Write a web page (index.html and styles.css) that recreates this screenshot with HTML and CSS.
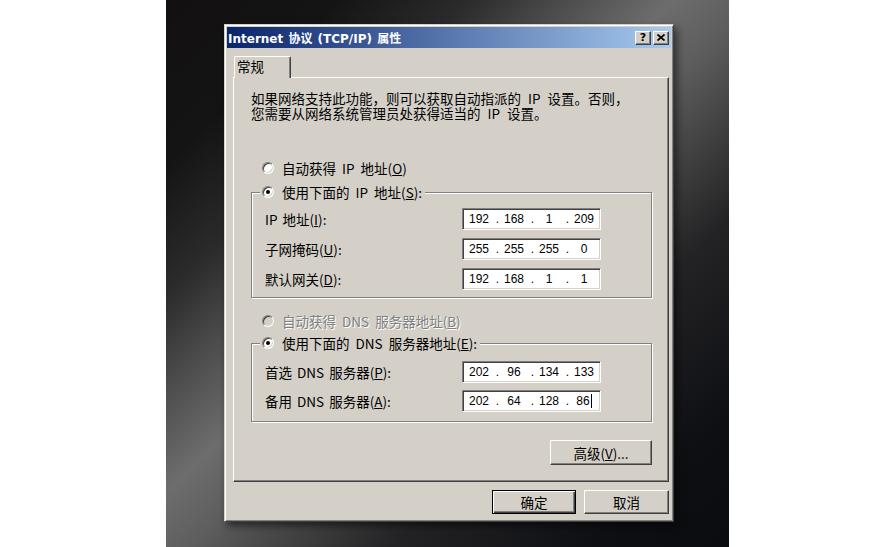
FILE: index.html
```html
<!DOCTYPE html>
<html lang="zh-CN">
<head>
<meta charset="utf-8">
<title>Internet 协议 (TCP/IP) 属性</title>
<link rel="stylesheet" href="styles.css">
</head>
<body>
<div class="stage">
  <div class="dialog">
    <div class="titlebar">
      <span class="title">Internet 协议 (TCP/IP) 属性</span>
      <div class="tbtns">
        <span class="tbtn">?</span>
        <span class="tbtn"><svg width="8" height="7" viewBox="0 0 8 7"><path d="M0.5 0.5 L7.5 6.5 M7.5 0.5 L0.5 6.5" stroke="#000" stroke-width="1.7" fill="none"/></svg></span>
      </div>
    </div>
    <div class="tabs"><div class="tab">常规</div></div>
    <div class="panel">
      <div class="intro">
        <div class="line">如果网络支持此功能，则可以获取自动指派的 IP 设置。否则，</div>
        <div class="line">您需要从网络系统管理员处获得适当的 IP 设置。</div>
      </div>

      <div class="radio r1"><span class="rb"></span><span>自动获得 IP 地址(<u>O</u>)</span></div>

      <fieldset class="group g1">
        <legend class="radio"><span class="rb on"></span><span>使用下面的 IP 地址(<u>S</u>):</span></legend>
        <div class="rows">
          <span class="lbl">IP 地址(<u>I</u>):</span>
          <div class="ip"><span class="oct">192</span><span class="dot">.</span><span class="oct">168</span><span class="dot">.</span><span class="oct">1</span><span class="dot">.</span><span class="oct">209</span></div>
          <span class="lbl">子网掩码(<u>U</u>):</span>
          <div class="ip"><span class="oct">255</span><span class="dot">.</span><span class="oct">255</span><span class="dot">.</span><span class="oct">255</span><span class="dot">.</span><span class="oct">0</span></div>
          <span class="lbl">默认网关(<u>D</u>):</span>
          <div class="ip"><span class="oct">192</span><span class="dot">.</span><span class="oct">168</span><span class="dot">.</span><span class="oct">1</span><span class="dot">.</span><span class="oct">1</span></div>
        </div>
      </fieldset>

      <div class="radio r3 dis"><span class="rb"></span><span>自动获得 DNS 服务器地址(<u>B</u>)</span></div>

      <fieldset class="group g2">
        <legend class="radio"><span class="rb on"></span><span>使用下面的 DNS 服务器地址(<u>E</u>):</span></legend>
        <div class="rows">
          <span class="lbl">首选 DNS 服务器(<u>P</u>):</span>
          <div class="ip"><span class="oct">202</span><span class="dot">.</span><span class="oct">96</span><span class="dot">.</span><span class="oct">134</span><span class="dot">.</span><span class="oct">133</span></div>
          <span class="lbl">备用 DNS 服务器(<u>A</u>):</span>
          <div class="ip"><span class="oct">202</span><span class="dot">.</span><span class="oct">64</span><span class="dot">.</span><span class="oct">128</span><span class="dot">.</span><span class="oct">86<span class="caret"></span></span></div>
        </div>
      </fieldset>

      <div class="btn advanced">高级(<u>V</u>)...</div>
    </div>
    <div class="footer">
      <div class="btn ok">确定</div>
      <div class="btn cancel">取消</div>
    </div>
  </div>
</div>
</body>
</html>
```
FILE: styles.css
```css
* { box-sizing: border-box; }
html, body { margin: 0; background: #fff; }
body {
  font-family: "Noto Sans CJK SC", "Liberation Sans", sans-serif;
  font-size: 13.5px;
  color: #000;
}
.stage {
  width: 563px;
  height: 547px;
  margin-left: 166px;
  padding: 24px 0 0 58px;
  background: linear-gradient(to bottom right, #121010 0%, #151414 15%, #2c2b2b 27%, #4a4a4a 35%, #6d6d6d 45%, #5e5e5e 52%, #4a4a4a 58%, #232325 70%, #0e0f13 88%, #0b0c10 100%);
}
.dialog {
  width: 450px;
  height: 498px;
  background: #d4d0c8;
  border: 1px solid;
  border-color: #d4d0c8 #404040 #404040 #d4d0c8;
  box-shadow: inset 1px 1px 0 #fff, inset -1px -1px 0 #808080, 3px 4px 8px rgba(0,0,0,.55);
  padding: 2px;
  display: flex;
  flex-direction: column;
}
.titlebar {
  height: 21px;
  flex: none;
  background: linear-gradient(to right, #0a246a, #a6caf0);
  display: flex;
  align-items: center;
  justify-content: space-between;
  padding: 0 2px 0 1px;
}
.title {
  color: #fff;
  font: bold 12px "DejaVu Sans", "Noto Sans CJK SC", sans-serif;
  white-space: nowrap;
  word-spacing: 1px;
}
.tbtns { display: flex; gap: 2px; }
.tbtn {
  width: 16px;
  height: 14px;
  background: #d4d0c8;
  border: 1px solid;
  border-color: #fff #404040 #404040 #fff;
  box-shadow: inset -1px -1px 0 #808080;
  display: flex;
  align-items: center;
  justify-content: center;
  font: bold 11px "DejaVu Sans", sans-serif;
  color: #000;
  line-height: 1;
}
.tabs {
  flex: none;
  margin-top: 8px;
  height: 21px;
  padding-left: 7px;
  display: flex;
}
.tab {
  position: relative;
  z-index: 1;
  width: 57px;
  height: 22px;
  background: #d4d0c8;
  border: 1px solid;
  border-color: #fff #404040 transparent #fff;
  border-bottom: 0;
  border-radius: 2px 2px 0 0;
  box-shadow: inset -1px 0 0 #808080;
  padding: 0 0 0 2px;
  line-height: 18px;
}
.panel {
  flex: none;
  height: 405px;
  margin: 0 2px 0 6px;
  border: 1px solid;
  border-color: #fff #404040 #404040 #fff;
  box-shadow: inset -1px -1px 0 #808080;
  padding: 13px 16px 0 17px;
  display: flex;
  flex-direction: column;
}
.intro { white-space: nowrap; word-spacing: 4px; }
.intro .line { height: 15px; line-height: 15px; }
.radio {
  display: flex;
  align-items: center;
  gap: 8px;
  height: 16px;
  line-height: 16px;
  white-space: nowrap;
  word-spacing: 3px;
}
.r1 { margin: 39px 0 0 11px; }
.r3 { margin: 15px 0 0 11px; }
.rb {
  flex: none;
  position: relative;
  width: 12px;
  height: 12px;
  border-radius: 50%;
  background: #fff;
  border: 1px solid;
  border-color: #808080 #fff #fff #808080;
  box-shadow: inset 1px 1px 0 #404040, inset -1px -1px 0 #d4d0c8;
}
.rb.on::after {
  content: "";
  position: absolute;
  left: 3px;
  top: 3px;
  width: 4px;
  height: 4px;
  border-radius: 50%;
  background: #000;
}
.dis { color: #808080; text-shadow: 1px 1px 0 #fff; }
.dis .rb { background: #d4d0c8; }
.group {
  margin: 8px 0 0;
  padding: 8px 0 7px 8px;
  border: 1px solid #808080;
  box-shadow: inset 1px 1px 0 #fff, 1px 1px 0 #fff;
  min-width: 0;
}
.g2 { margin-top: 6px; padding-top: 10px; padding-bottom: 9px; }
.group legend {
  padding: 0 3px 0 2px;
  margin: 0;
  background: #d4d0c8;
}
.rows {
  display: grid;
  grid-template-columns: 197px 139px;
  row-gap: 8px;
  align-items: center;
  margin-left: 5px;
}
.g2 .rows { row-gap: 7px; }
.lbl { white-space: nowrap; line-height: 16px; word-spacing: 2px; }
.ip {
  height: 22px;
  background: #fff;
  border: 1px solid;
  border-color: #808080 #fff #fff #808080;
  box-shadow: inset 1px 1px 0 #404040, inset -1px -1px 0 #d4d0c8;
  display: flex;
  align-items: center;
  padding: 0 1px;
  font: 12px "Liberation Sans", sans-serif;
}
.oct { width: 30px; text-align: center; }
.dot { width: 5px; text-align: right; }
.caret {
  display: inline-block;
  width: 1px;
  height: 14px;
  background: #000;
  vertical-align: -3px;
  margin-left: 1px;
}
.btn {
  background: #d4d0c8;
  border: 1px solid;
  border-color: #fff #404040 #404040 #fff;
  box-shadow: inset -1px -1px 0 #808080;
  display: flex;
  align-items: center;
  justify-content: center;
  white-space: nowrap;
}
.advanced {
  align-self: flex-end;
  margin-top: 18px;
  width: 102px;
  height: 25px;
}
.footer {
  flex: none;
  display: flex;
  justify-content: flex-end;
  gap: 8px;
  margin-top: 8px;
  padding-right: 2px;
}
.ok {
  width: 84px;
  height: 24px;
  border-color: #000;
  box-shadow: inset 1px 1px 0 #fff, inset -1px -1px 0 #404040, inset -2px -2px 0 #808080;
}
.cancel { width: 85px; height: 24px; }
```
